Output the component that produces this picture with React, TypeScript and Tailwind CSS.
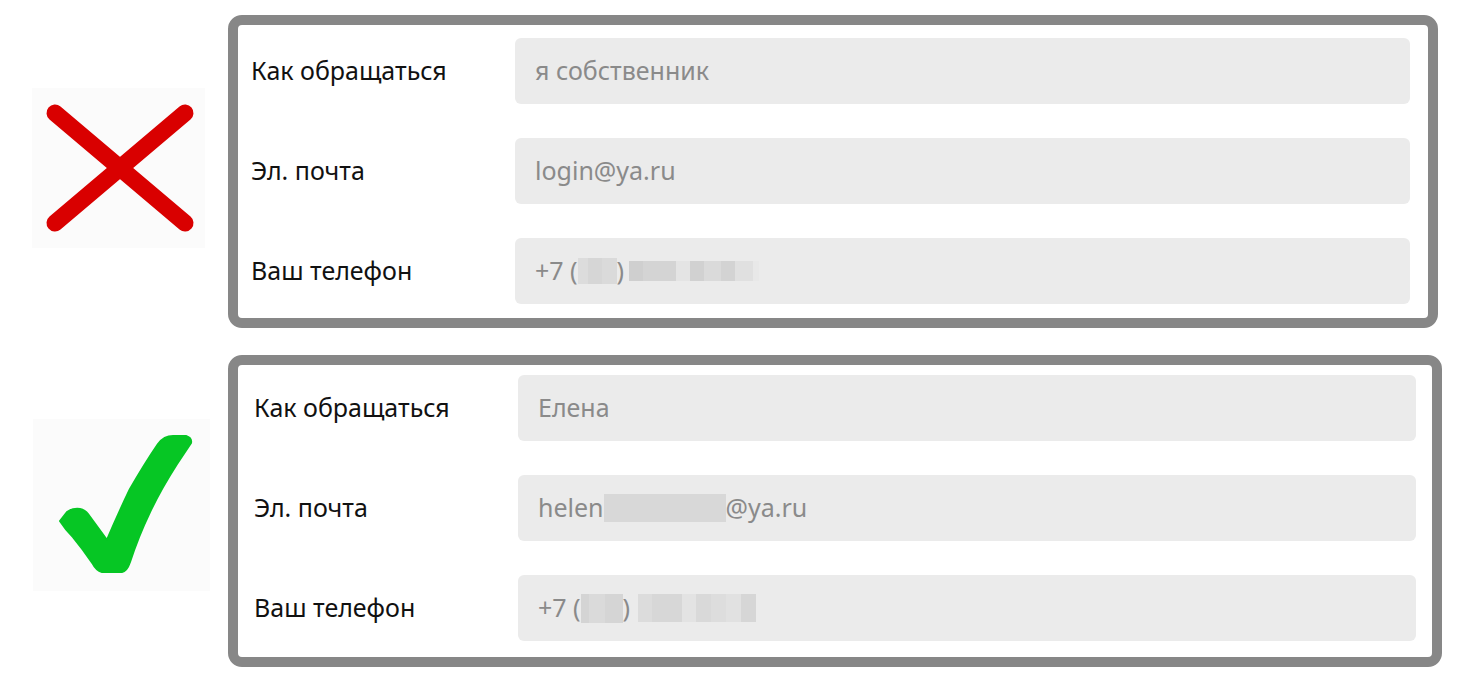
const font = { fontFamily: '"Noto Sans", "Open Sans", Arial, sans-serif' };

function Blur({ cells, h = 'h-[26px]' }: { cells: [number, string][]; h?: string }) {
  return (
    <span className={`inline-flex align-middle ${h}`}>
      {cells.map(([w, c], i) => (
        <span key={i} className="h-full" style={{ width: w, background: c }} />
      ))}
    </span>
  );
}

function Field({ label, children }: { label: string; children: React.ReactNode }) {
  return (
    <div className="flex items-center">
      <div className="w-[264px] shrink-0 text-[25px] text-[#111]">{label}</div>
      <div className="flex h-[66px] flex-1 items-center rounded-[6px] bg-[#ebebeb] pl-5 text-[25px] text-[#8a8a8a]">
        {children}
      </div>
    </div>
  );
}

function Cross() {
  return (
    <svg width="173" height="160" viewBox="0 0 173 160">
      <rect width="173" height="160" fill="#fbfbfb" />
      <g stroke="#d90000" strokeWidth="17" strokeLinecap="round">
        <line x1="23" y1="25" x2="153" y2="135" />
        <line x1="153" y1="25" x2="23" y2="135" />
      </g>
    </svg>
  );
}

function Check() {
  return (
    <svg width="177" height="172" viewBox="0 0 177 172">
      <rect width="177" height="172" fill="#fbfbfb" />
      <path
        d="M27 102 L34 93 Q40 89 47 90 Q52 91 55 95 L74 121 Q85 95 97 70 Q112 44 125 25 Q131 17 140 17 L153 17 Q159 19 158 24 L144 45 Q128 70 117 93 Q105 118 97 143 Q94 152 89 153 L69 153 Q63 151 60 145 Q50 130 40 118 Q32 110 27 102 Z"
        fill="#06c624"
        stroke="#06c624"
        strokeWidth="2"
        strokeLinejoin="round"
      />
    </svg>
  );
}

export default function App() {
  return (
    <div className="min-h-[694px] w-[1478px] bg-white pt-[15px]" style={font}>
      <div className="flex items-center">
        <div className="flex w-[228px] shrink-0 justify-start pl-[32px]">
          <div className="-mt-[8px]">
            <Cross />
          </div>
        </div>
        <div className="flex w-[1210px] flex-col gap-[34px] rounded-[14px] border-[10px] border-[#878787] pb-[14px] pl-[13px] pr-[18px] pt-[13px]">
          <Field label="Как обращаться">я собственник</Field>
          <Field label="Эл. почта">login@ya.ru</Field>
          <Field label="Ваш телефон">
            <span>+7 (</span>
            <Blur cells={[[10, '#dcdcdc'], [14, '#d6d6d6'], [15, '#dadada']]} />
            <span>)</span>
            <span className="w-[5px]" />
            <Blur
              h="h-[20px]"
              cells={[
                [14, '#cfcfcf'],
                [33, '#d4d4d4'],
                [14, '#e4e4e4'],
                [14, '#d1d1d1'],
                [17, '#dadada'],
                [14, '#d3d3d3'],
                [18, '#e0e0e0'],
                [6, '#e8e8e8'],
              ]}
            />
          </Field>
        </div>
      </div>
      <div className="mt-[27px] flex items-center">
        <div className="flex w-[228px] shrink-0 pl-[33px]">
          <div className="-mt-[12px]">
            <Check />
          </div>
        </div>
        <div className="flex w-[1214px] flex-col gap-[34px] rounded-[14px] border-[10px] border-[#878787] pb-[16px] pl-[16px] pr-[16px] pt-[10px]">
          <Field label="Как обращаться">Елена</Field>
          <Field label="Эл. почта">
            <span>helen</span>
            <Blur h="h-[28px]" cells={[[122, '#d8d8d8']]} />
            <span>@ya.ru</span>
          </Field>
          <Field label="Ваш телефон">
            <span>+7 (</span>
            <Blur h="h-[29px]" cells={[[8, '#d4d4d4'], [16, '#dadada'], [18, '#d5d5d5']]} />
            <span>)</span>
            <span className="w-[8px]" />
            <Blur
              h="h-[28px]"
              cells={[
                [14, '#dcdcdc'],
                [30, '#d7d7d7'],
                [14, '#e3e3e3'],
                [15, '#d9d9d9'],
                [15, '#dddddd'],
                [15, '#e1e1e1'],
                [15, '#d6d6d6'],
              ]}
            />
          </Field>
        </div>
      </div>
    </div>
  );
}
